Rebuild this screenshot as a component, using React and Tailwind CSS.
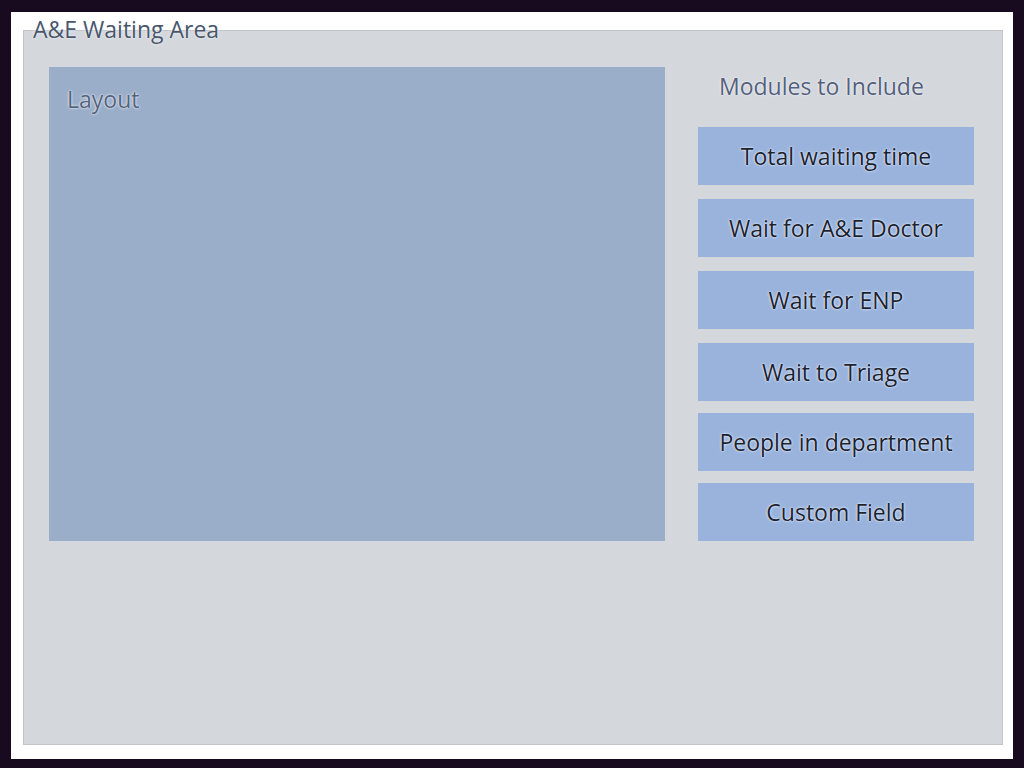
const modules = [
  { label: "Total waiting time", mt: "mt-[22px]" },
  { label: "Wait for A&E Doctor", mt: "mt-[14px]" },
  { label: "Wait for ENP", mt: "mt-[14px]" },
  { label: "Wait to Triage", mt: "mt-[14px]" },
  { label: "People in department", mt: "mt-[12px]" },
  { label: "Custom Field", mt: "mt-[12px]" },
];

const glow = "[text-shadow:0_0_3px_rgba(240,248,255,0.95),0_0_1px_rgba(255,255,255,1)]";

export default function App() {
  return (
    <div
      className="h-[768px] w-[1024px] bg-[#190b1f] pl-[11px] pr-[11px] pt-[12px] pb-[9px]"
      style={{ fontFamily: '"Open Sans", "Noto Sans", sans-serif' }}
    >
      <div className="h-full bg-white pl-[12px] pr-[10px] pt-[18px] pb-[14px]">
        <div className="relative h-full border border-[#c2c4c8] bg-[#d4d7dc] pl-[25px] pt-[36px] flex gap-[33px]">
          <div
            className={`absolute left-[9px] top-[-17px] text-[23px] leading-[30px] text-[#4a566a] ${glow}`}
          >
            A&amp;E Waiting Area
          </div>

          <div className="w-[616px] h-[474px] bg-[#9aadc9] pl-[18px] pt-[16px]">
            <div className={`text-[23px] leading-[32px] text-[#54637a] ${glow}`}>Layout</div>
          </div>

          <div className="w-[276px] flex flex-col">
            <div className={`h-[38px] pl-[21px] text-[23px] leading-[38px] text-[#54607a] ${glow}`}>
              Modules to Include
            </div>
            {modules.map((m) => (
              <div
                key={m.label}
                className={`${m.mt} h-[58px] shrink-0 bg-[#99b3dd] flex items-center justify-center text-[23px] text-[#1a2230] ${glow}`}
              >
                {m.label}
              </div>
            ))}
          </div>
        </div>
      </div>
    </div>
  );
}
